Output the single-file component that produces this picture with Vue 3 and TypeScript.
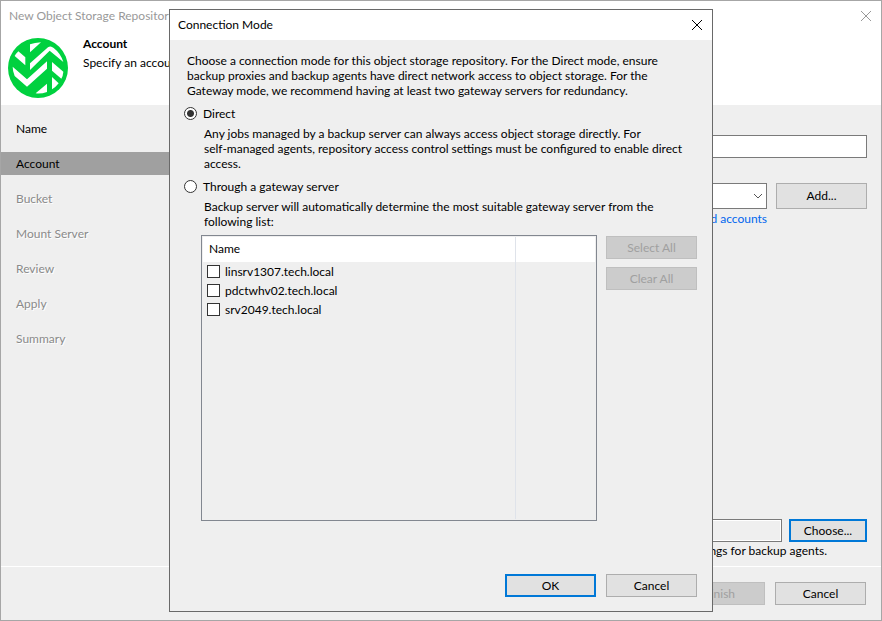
<script setup lang="ts">
import { ref } from 'vue'

interface Step {
  label: string
  state: 'done' | 'current' | 'pending'
}

interface Gateway {
  id: string
  host: string
  checked: boolean
}

const steps: Step[] = [
  { label: 'Name', state: 'done' },
  { label: 'Account', state: 'current' },
  { label: 'Bucket', state: 'pending' },
  { label: 'Mount Server', state: 'pending' },
  { label: 'Review', state: 'pending' },
  { label: 'Apply', state: 'pending' },
  { label: 'Summary', state: 'pending' },
]

const gateways = ref<Gateway[]>([
  { id: 'gw-1', host: 'linsrv1307.tech.local', checked: false },
  { id: 'gw-2', host: 'pdctwhv02.tech.local', checked: false },
  { id: 'gw-3', host: 'srv2049.tech.local', checked: false },
])

const mode = ref<'direct' | 'gateway'>('direct')
const endpoint = ref('')

function setAll(value: boolean): void {
  gateways.value.forEach((g) => (g.checked = value))
}
</script>

<template>
  <div class="wizard">
    <header class="wizard-top">
      <div class="titlebar">
        <span class="title muted">New Object Storage Repository</span>
        <button class="close muted" type="button" aria-label="Close wizard">
          <svg width="12" height="12" viewBox="0 0 12 12"><path d="M1 1L11 11M11 1L1 11" /></svg>
        </button>
      </div>
      <div class="banner">
        <svg class="logo" viewBox="0 0 180 180" aria-hidden="true">
          <circle cx="90" cy="90" r="90" fill="#00d13f" />
          <g fill="#fff">
            <path d="M66 19Q80 14 99 13L66 43Z" />
            <path d="M31 40L52 58V82L20 54Q24 47 31 40Z" />
            <path d="M66 76L120 28Q128 22 137 30Q158 46 166 72L125 38L66 96Z" />
            <path d="M14 86L57 124L117 70V92L57 146L20 114Q14 100 14 86Z" />
            <path d="M132 72L166 101Q165 114 160 122L132 98Z" />
            <path d="M132 117L152 136Q143 148 132 154Z" />
            <path d="M117 137V162Q100 168 83 166Z" />
          </g>
        </svg>
        <div>
          <h1>Account</h1>
          <p>Specify an account</p>
        </div>
      </div>
    </header>

    <div class="wizard-main">
      <nav class="steps">
        <a v-for="s in steps" :key="s.label" href="#" :class="['step', s.state]">{{ s.label }}</a>
      </nav>
      <form class="form" @submit.prevent>
        <input v-model="endpoint" class="field" type="text" aria-label="Service point" />
        <div class="row">
          <div class="combo">
            <select aria-label="Credentials"></select>
            <svg width="10" height="6" viewBox="0 0 10 6"><path d="M1 1L5 5L9 1" /></svg>
          </div>
          <button class="btn tall" type="button">Add...</button>
        </div>
        <a class="link" href="#">Manage cloud accounts</a>
        <div class="spacer"></div>
        <div class="row tight">
          <input class="field readonly" type="text" readonly aria-label="Connection mode" />
          <button class="btn primary choose" type="button">Choose...</button>
        </div>
        <p class="hint">settings for backup agents.</p>
      </form>
    </div>

    <footer class="wizard-footer">
      <button class="btn" type="button" disabled>Finish</button>
      <button class="btn" type="button">Cancel</button>
    </footer>

    <div class="overlay">
      <section class="dialog" role="dialog" aria-labelledby="dialog-title">
        <div class="titlebar dialog-bar">
          <h2 id="dialog-title" class="title">Connection Mode</h2>
          <button class="close" type="button" aria-label="Close">
            <svg width="12" height="12" viewBox="0 0 12 12"><path d="M1 1L11 11M11 1L1 11" /></svg>
          </button>
        </div>
        <div class="dialog-body">
          <p>
            Choose a connection mode for this object storage repository. For the Direct mode, ensure<br />
            backup proxies and backup agents have direct network access to object storage. For the<br />
            Gateway mode, we recommend having at least two gateway servers for redundancy.
          </p>
          <label class="radio">
            <input v-model="mode" type="radio" name="mode" value="direct" />Direct
          </label>
          <p class="indent">
            Any jobs managed by a backup server can always access object storage directly. For<br />
            self-managed agents, repository access control settings must be configured to enable direct<br />
            access.
          </p>
          <label class="radio">
            <input v-model="mode" type="radio" name="mode" value="gateway" />Through a gateway server
          </label>
          <p class="indent">
            Backup server will automatically determine the most suitable gateway server from the<br />
            following list:
          </p>
          <div class="gateways">
            <div class="listbox">
              <table>
                <thead>
                  <tr>
                    <th>Name</th>
                    <th class="extra-col"></th>
                  </tr>
                </thead>
                <tbody>
                  <tr v-for="g in gateways" :key="g.id">
                    <td>
                      <label class="check"><input v-model="g.checked" type="checkbox" />{{ g.host }}</label>
                    </td>
                    <td></td>
                  </tr>
                  <tr class="rest">
                    <td></td>
                    <td></td>
                  </tr>
                </tbody>
              </table>
            </div>
            <div class="side">
              <button class="btn" type="button" :disabled="mode === 'direct'" @click="setAll(true)">Select All</button>
              <button class="btn" type="button" :disabled="mode === 'direct'" @click="setAll(false)">Clear All</button>
            </div>
          </div>
        </div>
        <div class="dialog-footer">
          <button class="btn primary" type="button">OK</button>
          <button class="btn" type="button">Cancel</button>
        </div>
      </section>
    </div>
  </div>
</template>

<style>
body {
  margin: 0;
  background: #efefef;
}
</style>

<style scoped>
* {
  box-sizing: border-box;
}
.wizard {
  position: relative;
  display: flex;
  flex-direction: column;
  min-height: 100vh;
  border: 1px solid #a6a6a6;
  background: #efefef;
  color: #000;
  font-family: Lato, "Noto Sans", sans-serif;
  font-size: 12px;
  line-height: 15px;
  white-space: nowrap;
}
button,
input,
select {
  margin: 0;
  font: inherit;
  color: inherit;
}
h1,
h2,
p {
  margin: 0;
  font-size: 12px;
}
.wizard-top {
  background: #fff;
  height: 104px;
}
.titlebar {
  display: flex;
  align-items: center;
  justify-content: space-between;
  height: 30px;
  padding: 0 9px 0 8px;
}
.title {
  padding-bottom: 1px;
  font-weight: 400;
}
.muted {
  color: #999;
}
.close {
  display: flex;
  padding: 0;
  border: 0;
  background: none;
}
.close svg {
  fill: none;
  stroke: currentColor;
}
.banner {
  display: flex;
  gap: 15px;
  padding: 5px 7px;
}
.logo {
  width: 60px;
  height: 60px;
  margin-top: 2px;
}
.banner h1 {
  font-weight: 700;
  margin-bottom: 4px;
}
.wizard-main {
  display: flex;
  flex: 1;
}
.steps {
  display: flex;
  flex-direction: column;
  gap: 12px;
  width: 170px;
  padding-top: 12px;
}
.step {
  padding: 4px 15px;
  color: #000;
  text-decoration: none;
}
.current {
  background: #a0a0a0;
}
.pending {
  color: #8a8a8a;
  text-shadow: 1px 1px 0 #fff;
}
.form {
  display: flex;
  flex: 1;
  flex-direction: column;
  padding: 30px 14px 8px;
}
.field {
  width: 100%;
  height: 23px;
  padding: 0 4px;
  border: 1px solid #7a7a7a;
  background: #fff;
}
.field + .row {
  margin-top: 25px;
}
.row {
  display: flex;
  gap: 9px;
}
.tight {
  gap: 7px;
  align-items: center;
}
.readonly {
  flex: 1;
  background: #efefef;
  box-shadow: inset 0 0 0 1px #fff;
}
.combo {
  display: grid;
  flex: 1;
  align-items: center;
  border: 1px solid #7a7a7a;
  background: #fff;
}
.combo select {
  grid-area: 1 / 1;
  height: 24px;
  border: 0;
  background: none;
  appearance: none;
}
.combo svg {
  grid-area: 1 / 1;
  justify-self: end;
  margin-right: 3px;
  fill: none;
  stroke: #555;
  pointer-events: none;
}
.link {
  align-self: end;
  margin: 2px 100px 0 0;
  color: #0066ee;
  text-decoration: none;
}
.spacer {
  flex: 1;
}
.hint {
  align-self: end;
  padding: 1px 40px 0 0;
}
.btn {
  width: 91px;
  height: 23px;
  padding: 0 0 1px;
  border: 1px solid #adadad;
  background: #e1e1e1;
  text-align: center;
}
.btn:disabled {
  border-color: #bfbfbf;
  background: #ccc;
  color: #a0a0a0;
}
.btn.tall {
  height: 26px;
}
.btn.primary {
  border: 2px solid #0078d7;
}
.choose {
  width: 78px;
}
.wizard-footer {
  display: flex;
  justify-content: flex-end;
  gap: 10px;
  padding: 15px;
  border-top: 1px solid #fff;
}
.overlay {
  position: absolute;
  inset: 0;
  display: flex;
  align-items: center;
  justify-content: center;
}
.dialog {
  width: 544px;
  max-width: 100%;
  border: 1px solid #696969;
  background: #efefef;
}
.dialog-bar {
  background: #fff;
}
.dialog-body {
  padding: 13px 15px 0 17px;
}
.radio {
  display: flex;
  align-items: center;
  gap: 6px;
  width: fit-content;
  padding: 8px 0 5px;
  margin-left: -3px;
}
.radio input {
  width: 13px;
  height: 13px;
  border: 1px solid #333;
  border-radius: 50%;
  background: #fff;
  appearance: none;
}
.radio input:checked {
  background: radial-gradient(circle, #333 3px, #fff 4px);
}
.indent {
  padding-left: 17px;
}
.gateways {
  display: flex;
  gap: 9px;
  padding: 6px 0 0 14px;
}
.listbox {
  flex: 1;
  height: 286px;
  padding: 1px;
  border: 1px solid #828790;
}
table {
  width: 100%;
  height: 100%;
  border-collapse: separate;
  border-spacing: 0;
  table-layout: fixed;
}
th {
  height: 25px;
  padding: 0 6px 2px;
  background: #fff;
  font-weight: 400;
  text-align: left;
}
.extra-col {
  width: 79px;
}
td {
  height: 19px;
  padding: 0 4px;
}
th:first-child,
td:first-child {
  border-right: 1px solid #dfe3ea;
}
.rest td {
  height: auto;
}
.check {
  display: flex;
  align-items: center;
  gap: 5px;
}
.check input {
  width: 13px;
  height: 13px;
  border: 1px solid #333;
  background: #fff;
  appearance: none;
}
.check input:checked {
  background: #333;
  box-shadow: inset 0 0 0 2px #fff;
}
.side {
  display: flex;
  flex-direction: column;
  gap: 8px;
  padding-top: 1px;
}
.dialog-footer {
  display: flex;
  justify-content: flex-end;
  gap: 10px;
  padding: 53px 15px 14px;
}
</style>
